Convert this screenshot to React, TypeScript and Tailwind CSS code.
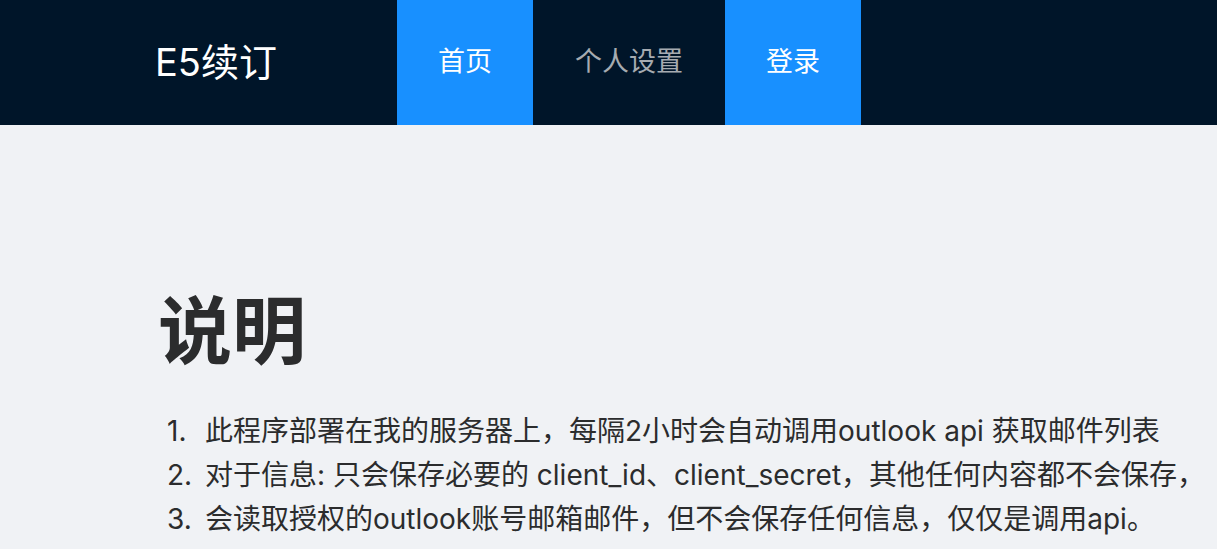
export default function App() {
  const menu = [
    { label: '首页', active: true, width: 'w-[136px]' },
    { label: '个人设置', active: false, width: 'w-[192px]' },
    { label: '登录', active: true, width: 'w-[136px]' },
  ]

  const items = [
    '此程序部署在我的服务器上，每隔2小时会自动调用outlook api 获取邮件列表',
    '对于信息: 只会保存必要的 client_id、client_secret，其他任何内容都不会保存，',
    '会读取授权的outlook账号邮箱邮件，但不会保存任何信息，仅仅是调用api。',
  ]

  return (
    <div
      className="min-h-screen overflow-hidden bg-[#f0f2f5]"
      style={{ fontFamily: 'Inter, "Noto Sans CJK SC", sans-serif' }}
    >
      {/* 顶部导航 */}
      <header className="flex h-[125px] items-stretch bg-[#001529] pl-[155px]">
        <div className="flex w-[242px] items-center text-[38px] text-white">E5续订</div>
        <nav className="flex">
          {menu.map((m) => (
            <div
              key={m.label}
              className={`flex ${m.width} items-center justify-center text-[27px] ${
                m.active ? 'bg-[#1890ff] text-white' : 'text-[#a6abb1]'
              }`}
            >
              {m.label}
            </div>
          ))}
        </nav>
      </header>

      {/* 内容 */}
      <main className="pl-[158px] pt-[160px] text-[#2b2c2d]">
        <h1 className="text-[74px] font-semibold leading-[92px]">说明</h1>
        <ol className="mt-[32px] text-[28px] leading-[44px]">
          {items.map((t, i) => (
            <li key={t} className="flex whitespace-nowrap">
              <span className="w-[47px] shrink-0 pl-[9px]">{i + 1}.</span>
              <span>{t}</span>
            </li>
          ))}
        </ol>
      </main>
    </div>
  )
}
